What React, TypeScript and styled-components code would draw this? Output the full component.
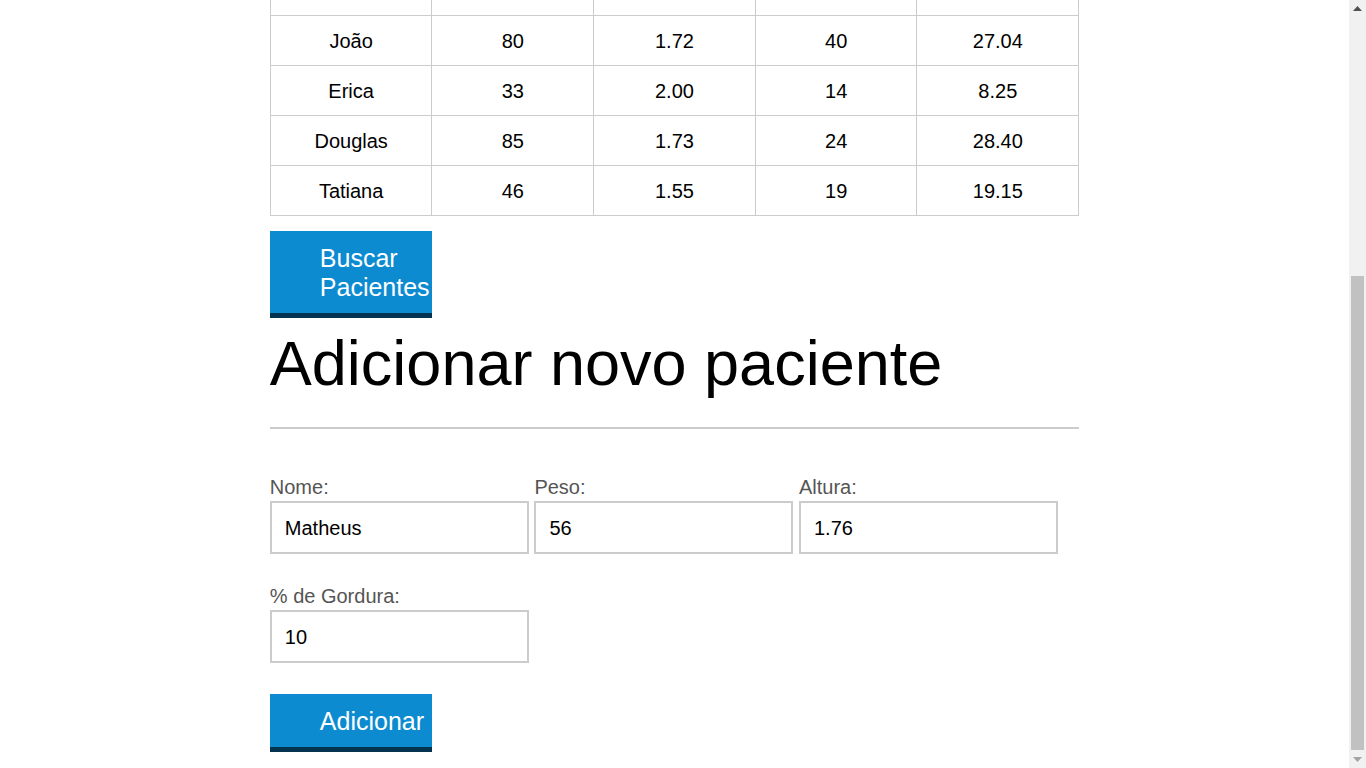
import React, { useLayoutEffect, useEffect, useRef } from "react";
import styled, { createGlobalStyle } from "styled-components";

const GlobalStyle = createGlobalStyle`
  html, body {
    margin: 0;
    padding: 0;
    background: #ffffff;
    overflow: hidden;
  }
  body {
    font-family: "Liberation Sans", Arial, sans-serif;
    color: #000;
  }
`;

const Frame = styled.div`
  display: flex;
  height: 100vh;
  width: 100%;
`;

const Scroller = styled.div`
  flex: 1;
  min-width: 0;
  height: 100%;
  overflow-y: auto;
  scrollbar-width: none;
  &::-webkit-scrollbar {
    display: none;
  }
`;

const Rail = styled.div`
  width: 17px;
  flex: none;
  height: 100%;
  background: #f1f1f1;
  display: flex;
  flex-direction: column;
`;

const ArrowBox = styled.div`
  height: 17px;
  flex: none;
  display: flex;
  align-items: center;
  justify-content: center;
`;

const Track = styled.div`
  flex: 1;
  display: flex;
  flex-direction: column;
  padding: 0 2px;
`;

const Thumb = styled.div`
  margin-top: 259px;
  height: 474px;
  background: #c1c1c1;
`;

const Header = styled.header`
  background: #0e8bd1;
  padding: 50px 0;
`;

const Container = styled.div`
  width: 60%;
  margin: 0 auto;
`;

const SiteTitle = styled.h1`
  margin: 0;
  font-size: 40px;
  line-height: 46px;
  font-weight: normal;
  color: #fff;
`;

const Main = styled.main`
  padding-bottom: 16px;
`;

const SectionTitle = styled.h2`
  margin: 64px 0 46px;
  font-size: 48px;
  line-height: 55px;
  font-weight: normal;
`;

const Table = styled.table`
  width: 100%;
  border-collapse: collapse;
  table-layout: fixed;
  font-size: 20px;
  line-height: 23px;
`;

const HeadCell = styled.th`
  border: 1px solid #ccc;
  padding: 14px 8px 12px;
  text-align: center;
`;

const Cell = styled.td`
  border: 1px solid #ccc;
  padding: 14px 8px 12px;
  text-align: center;
`;

const Button = styled.button`
  display: block;
  box-sizing: border-box;
  width: 20%;
  margin: 15px 0 0;
  padding: 13px 50px 11px;
  border: none;
  border-bottom: 5px solid #04334f;
  background: #0d8bd1;
  color: #fff;
  font-family: "Liberation Sans", Arial, sans-serif;
  font-size: 25px;
  line-height: 29px;
  text-align: left;
  white-space: normal;
  cursor: pointer;
`;

const SubmitButton = styled(Button)`
  margin-top: 31px;
`;

const FormTitle = styled.h2`
  margin: 10px 0 0;
  font-size: 63px;
  line-height: 70px;
  font-weight: normal;
`;

const Divider = styled.hr`
  margin: 29px 0 0;
  border: none;
  height: 2px;
  background: #ccc;
`;

const Form = styled.form`
  margin-top: 46px;
`;

const FieldRow = styled.div<{ $first?: boolean }>`
  display: flex;
  gap: 5.6px;
  margin-top: ${(p) => (p.$first ? "0" : "30px")};
`;

const Group = styled.div`
  width: 32%;
  display: flex;
  flex-direction: column;
`;

const Label = styled.label`
  padding-top: 1px;
  font-size: 20px;
  line-height: 23px;
  color: #555;
`;

const Input = styled.input`
  box-sizing: border-box;
  width: 100%;
  height: 53px;
  margin-top: 2px;
  padding: 2px 13px 0;
  border: 2px solid #ccc;
  font-family: "Liberation Sans", Arial, sans-serif;
  font-size: 20px;
  color: #000;
  background: #fff;
  outline: none;
`;

type Patient = { nome: string; peso: string; altura: string; gordura: string; imc: string };

const patients: Patient[] = [
  { nome: "Paulo", peso: "100", altura: "2.00", gordura: "10", imc: "25.00" },
  { nome: "João", peso: "80", altura: "1.72", gordura: "40", imc: "27.04" },
  { nome: "Erica", peso: "33", altura: "2.00", gordura: "14", imc: "8.25" },
  { nome: "Douglas", peso: "85", altura: "1.73", gordura: "24", imc: "28.40" },
  { nome: "Tatiana", peso: "46", altura: "1.55", gordura: "19", imc: "19.15" },
];

const ArrowIcon = ({ up, color }: { up?: boolean; color: string }) => (
  <svg width="9" height="5" viewBox="0 0 9 5">
    {up ? <polygon points="0,5 4.5,0 9,5" fill={color} /> : <polygon points="0,0 4.5,5 9,0" fill={color} />}
  </svg>
);

export default function App() {
  const scrollRef = useRef<HTMLDivElement>(null);
  const toBottom = () => {
    const el = scrollRef.current;
    if (el) el.scrollTop = el.scrollHeight;
  };
  useLayoutEffect(() => {
    toBottom();
  }, []);
  useEffect(() => {
    toBottom();
    const t = setTimeout(toBottom, 50);
    return () => clearTimeout(t);
  }, []);

  return (
    <>
      <GlobalStyle />
      <Frame>
        <Scroller ref={scrollRef}>
          <Header>
            <Container>
              <SiteTitle>Aparecida Nutricionista</SiteTitle>
            </Container>
          </Header>
          <Main>
            <Container>
              <SectionTitle>Meus pacientes</SectionTitle>
              <Table>
                <thead>
                  <tr>
                    <HeadCell>Nome</HeadCell>
                    <HeadCell>Peso(kg)</HeadCell>
                    <HeadCell>Altura(m)</HeadCell>
                    <HeadCell>Gordura Corporal(%)</HeadCell>
                    <HeadCell>IMC</HeadCell>
                  </tr>
                </thead>
                <tbody>
                  {patients.map((p) => (
                    <tr key={p.nome}>
                      <Cell>{p.nome}</Cell>
                      <Cell>{p.peso}</Cell>
                      <Cell>{p.altura}</Cell>
                      <Cell>{p.gordura}</Cell>
                      <Cell>{p.imc}</Cell>
                    </tr>
                  ))}
                </tbody>
              </Table>
              <Button type="button">Buscar Pacientes</Button>
              <FormTitle>Adicionar novo paciente</FormTitle>
              <Divider />
              <Form onSubmit={(e) => e.preventDefault()}>
                <FieldRow $first>
                  <Group>
                    <Label htmlFor="nome">Nome:</Label>
                    <Input id="nome" type="text" defaultValue="Matheus" />
                  </Group>
                  <Group>
                    <Label htmlFor="peso">Peso:</Label>
                    <Input id="peso" type="text" defaultValue="56" />
                  </Group>
                  <Group>
                    <Label htmlFor="altura">Altura:</Label>
                    <Input id="altura" type="text" defaultValue="1.76" />
                  </Group>
                </FieldRow>
                <FieldRow>
                  <Group>
                    <Label htmlFor="gordura">% de Gordura:</Label>
                    <Input id="gordura" type="text" defaultValue="10" />
                  </Group>
                </FieldRow>
                <SubmitButton type="submit">Adicionar</SubmitButton>
              </Form>
            </Container>
          </Main>
        </Scroller>
        <Rail aria-hidden="true">
          <ArrowBox>
            <ArrowIcon up color="#505050" />
          </ArrowBox>
          <Track>
            <Thumb />
          </Track>
          <ArrowBox>
            <ArrowIcon color="#a3a3a3" />
          </ArrowBox>
        </Rail>
      </Frame>
    </>
  );
}
